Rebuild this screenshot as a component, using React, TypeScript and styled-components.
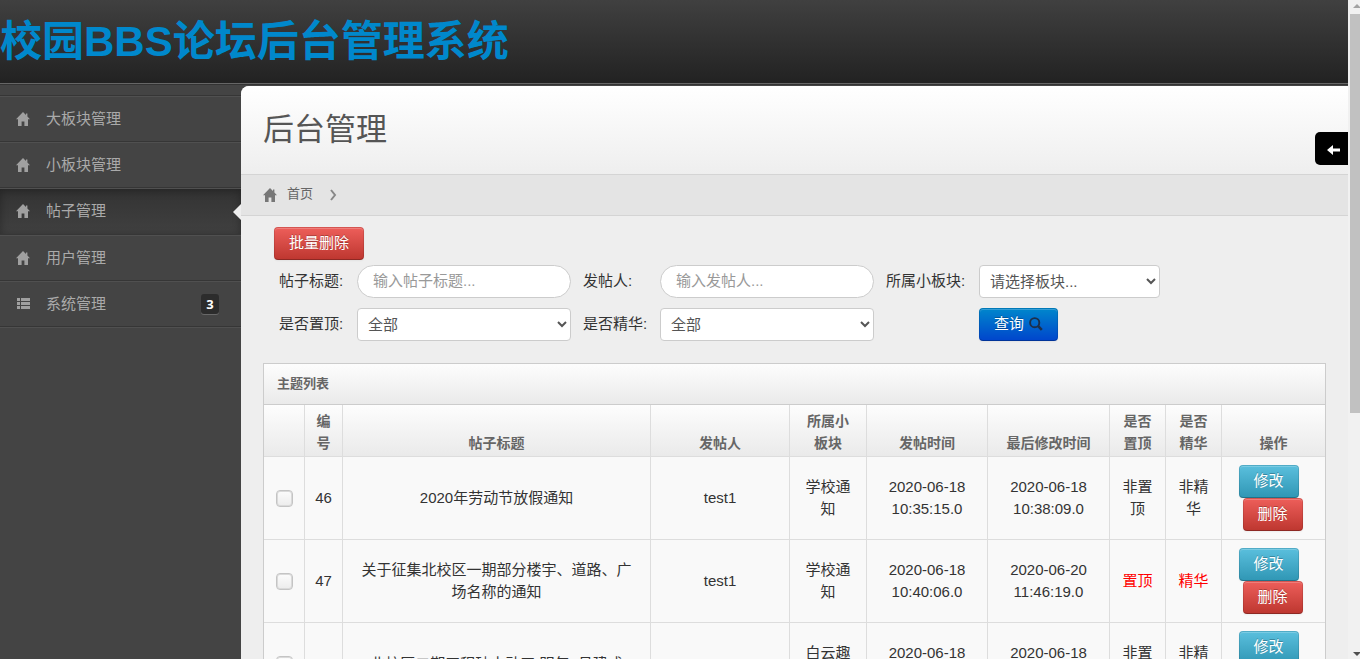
import React from "react";
import styled, { createGlobalStyle, css } from "styled-components";

const GlobalStyle = createGlobalStyle`
  *, *::before, *::after { box-sizing: border-box; }
  body {
    margin: 0;
    background: #444;
    color: #333;
    font-family: "Liberation Sans", "Noto Sans CJK SC", sans-serif;
    font-size: 15px;
    line-height: 22px;
  }
  button, input, select { font: inherit; margin: 0; }
`;

const Shell = styled.div`
  display: grid;
  grid-template-columns: minmax(0, 1fr) 12px;
  height: 100vh;
  overflow: hidden;
`;

const Page = styled.div`
  position: relative;
  display: flex;
  flex-direction: column;
  min-height: 0;
  overflow: hidden;
`;

const Header = styled.header`
  flex: none;
  height: 84px;
  background: linear-gradient(#404040, #222);
  border-bottom: 1px solid #666;
`;

const Brand = styled.h1`
  margin: 0;
  padding-top: 20px;
  font-size: 42px;
  line-height: 44px;
  white-space: nowrap;
`;

const BrandLink = styled.a`
  color: #08c;
  text-decoration: none;
`;

const Body = styled.div`
  display: flex;
  flex: 1;
  min-height: 0;
  padding-top: 1px;
  border-top: 1px solid #333;
`;

const Sidebar = styled.nav`
  flex: none;
  width: 241px;
`;

const Menu = styled.ul`
  list-style: none;
  margin: 9px 0 0;
  padding: 0;
  border-top: 1px solid #363636;
  border-bottom: 1px solid #505050;
`;

const MenuItem = styled.li<{ $active?: boolean }>`
  position: relative;
  border-top: 1px solid #505050;
  border-bottom: 1px solid #363636;
  ${(p) =>
    p.$active &&
    css`
      padding-bottom: 1px;
      background: linear-gradient(#333, #404040);
      box-shadow: inset 0 2px 8px rgba(0, 0, 0, 0.3);
      &::after {
        content: "";
        position: absolute;
        right: 0;
        top: 15px;
        border: 8px solid transparent;
        border-left: 0;
        border-right-color: #eee;
      }
    `}
`;

const MenuLink = styled.a`
  display: flex;
  align-items: center;
  height: 44px;
  padding: 0 22px 0 16px;
  color: #aaa;
  text-decoration: none;
  svg { margin-right: 16px; }
`;

const Badge = styled.span`
  margin-left: auto;
  width: 18px;
  height: 20px;
  border-radius: 3px;
  background: #2c2c2c;
  box-shadow: 0 1px 0 #686868;
  color: #fff;
  font-family: "Noto Sans", sans-serif;
  font-size: 13px;
  font-weight: 700;
  line-height: 20px;
  text-align: center;
`;

const Main = styled.main`
  flex: 1;
  min-width: 0;
  overflow: hidden;
  background: #eee;
  border-top-left-radius: 8px;
`;

const TitleBar = styled.div`
  height: 89px;
  padding: 22px;
  background: linear-gradient(#fff, #eee);
  border-bottom: 1px solid #d4d4d4;
`;

const Title = styled.h2`
  margin: 0;
  color: #555;
  font-size: 31px;
  font-weight: 400;
  line-height: 44px;
`;

const Crumbs = styled.nav`
  display: flex;
  align-items: center;
  height: 41px;
  padding: 0 22px;
  background: #e4e4e4;
  border-bottom: 1px solid #d4d4d4;
`;

const CrumbLink = styled.a`
  display: flex;
  align-items: center;
  gap: 10px;
  margin-right: 17px;
  color: #666;
  font-size: 13px;
  text-decoration: none;
  span { padding-bottom: 2px; }
`;

const tones = {
  danger: ["#ee5f5b", "#bd362f"],
  info: ["#5bc0de", "#2f96b4"],
  primary: ["#0088cc", "#0044cc"],
};

const Button = styled.button<{ $tone: keyof typeof tones }>`
  display: inline-flex;
  align-items: center;
  justify-content: center;
  gap: 5px;
  height: 33px;
  padding: 0 12px 1px;
  min-width: 60px;
  border: 1px solid;
  border-color: rgba(0, 0, 0, 0.1) rgba(0, 0, 0, 0.1) rgba(0, 0, 0, 0.25);
  border-radius: 4px;
  background: linear-gradient(${(p) => tones[p.$tone][0]}, ${(p) => tones[p.$tone][1]}) border-box;
  box-shadow: inset 0 1px 0 rgba(255, 255, 255, 0.2), 0 1px 2px rgba(0, 0, 0, 0.05);
  color: #fff;
  text-shadow: 0 -1px 0 rgba(0, 0, 0, 0.25);
  white-space: nowrap;
  cursor: pointer;
`;

const Toolbar = styled.div`
  padding: 11px 33px 5px;
  button { min-width: 90px; }
`;

const Filters = styled.form`
  display: grid;
  grid-template-columns: 66px 214px 65px 214px 81px 181px;
  gap: 10px 12px;
  padding: 0 38px;
  color: #333;
`;

const Label = styled.label`
  padding-top: 5px;
  white-space: nowrap;
`;

const TextInput = styled.input`
  width: 100%;
  height: 33px;
  padding: 0 15px 2px;
  border: 1px solid #ccc;
  border-radius: 17px;
  background: #fff;
  color: #555;
  outline: none;
  &::placeholder { color: #999; }
`;

const Select = styled.select`
  width: 100%;
  height: 33px;
  padding: 0 6px;
  border: 1px solid #ccc;
  border-radius: 4px;
  background: #fff;
  color: #555;
`;

const SubmitCell = styled.div`
  grid-column: 6;
  button { min-width: 79px; }
`;

const Panel = styled.section`
  margin: 22px 22px 0;
  border: 1px solid #ccc;
  background: #f9f9f9;
`;

const PanelTitle = styled.h3`
  margin: 0;
  height: 41px;
  padding: 0 13px;
  background: linear-gradient(#fdfdfd, #eaeaea);
  border-bottom: 1px solid #ccc;
  color: #666;
  font-size: 13px;
  line-height: 40px;
`;

const Table = styled.table`
  width: 100%;
  table-layout: fixed;
  border-collapse: separate;
  border-spacing: 0;
  text-align: center;
`;

const Col = styled.col<{ $w?: number }>`
  width: ${(p) => (p.$w ? `${p.$w}px` : "auto")};
`;

const cell = css`
  border-bottom: 1px solid #ddd;
  &:not(:first-child) { border-left: 1px solid #ddd; }
`;

const Th = styled.th<{ $tight?: boolean }>`
  ${cell}
  padding: 5px ${(p) => (p.$tight ? 8 : 12)}px 2px;
  background: linear-gradient(#fdfdfd, #eaeaea);
  color: #666;
  font-size: 14px;
  vertical-align: bottom;
`;

const Td = styled.td<{ $tight?: boolean; $hot?: boolean }>`
  ${cell}
  padding: 8px ${(p) => (p.$tight ? 8 : 12)}px;
  color: ${(p) => (p.$hot ? "#f00" : "#333")};
  vertical-align: middle;
`;

const Check = styled.input`
  appearance: none;
  display: block;
  width: 17px;
  height: 17px;
  margin: 0 auto;
  border: 1px solid #c4c4c4;
  border-radius: 4px;
  background: linear-gradient(#fcfcfc, #ececec);
  box-shadow: inset 0 0 0 1px #dadada;
`;

const Actions = styled.div`
  display: flex;
  flex-direction: column;
  align-items: center;
  padding-right: 2px;
  button:first-child { margin-right: 8px; }
`;

const Toggle = styled.button`
  position: absolute;
  top: 132px;
  right: 0;
  display: flex;
  align-items: center;
  justify-content: center;
  width: 33px;
  height: 33px;
  padding: 2px 0 0 4px;
  border: 0;
  border-radius: 5px 0 0 5px;
  background: #000;
`;

const ScrollTrack = styled.div`
  display: flex;
  flex-direction: column;
  justify-content: space-between;
  padding: 4px 0 2px 2px;
  background: #f1f1f1;
`;

const ScrollThumb = styled.div`
  width: 10px;
  height: 399px;
  margin: 5px 0 auto;
  background: #c1c1c1;
`;

const HomeIcon = ({ color = "#a0a0a0" }: { color?: string }) => (
  <svg width="14" height="14" viewBox="0 0 14 14" fill={color} aria-hidden="true">
    <path d="M7 0 0 7.2h2V14h3.6V9.6h2.8V14H12V7.2h2L11.4 4.5V1.6H10v1.5z" />
  </svg>
);

const ListIcon = () => (
  <svg width="14" height="14" viewBox="0 0 14 14" fill="#a0a0a0" aria-hidden="true">
    <path d="M1 1h3v3H1zM5 1h9v3H5zM1 5h3v3H1zM5 5h9v3H5zM1 9h3v3H1zM5 9h9v3H5z" />
  </svg>
);

const SearchIcon = () => (
  <svg width="14" height="14" viewBox="0 0 14 14" fill="none" stroke="#1c2f4a" aria-hidden="true">
    <circle cx="5.7" cy="5.7" r="4.6" strokeWidth="1.9" />
    <path d="m9.2 9.2 3.6 3.6" strokeWidth="2.6" />
  </svg>
);

const ArrowLeft = () => (
  <svg width="13" height="10" viewBox="0 0 13 10" fill="#fff" aria-hidden="true">
    <path d="M0 5 6 0v3.4h7v3.2H6V10z" />
  </svg>
);

const menu = [
  { label: "大板块管理" },
  { label: "小板块管理" },
  { label: "帖子管理", active: true },
  { label: "用户管理" },
  { label: "系统管理", count: 3 },
];

const columns: { label: string; width?: number; tight?: boolean }[] = [
  { label: "", width: 40, tight: true },
  { label: "编号", width: 38, tight: true },
  { label: "帖子标题" },
  { label: "发帖人", width: 139 },
  { label: "所属小板块", width: 77 },
  { label: "发帖时间", width: 121 },
  { label: "最后修改时间", width: 122 },
  { label: "是否置顶", width: 56 },
  { label: "是否精华", width: 56 },
  { label: "操作", width: 104 },
];

const posts = [
  { id: 46, title: "2020年劳动节放假通知", user: "test1", board: "学校通知", created: "2020-06-18 10:35:15.0", updated: "2020-06-18 10:38:09.0", top: false, best: false },
  { id: 47, title: "关于征集北校区一期部分楼宇、道路、广场名称的通知", user: "test1", board: "学校通知", created: "2020-06-18 10:40:06.0", updated: "2020-06-20 11:46:19.0", top: true, best: true },
  { id: 48, title: "北校区二期工程破土动工,明年9月建成", user: "test2", board: "白云趣事", created: "2020-06-18 10:42:31.0", updated: "2020-06-18 10:42:31.0", top: false, best: false },
];

export default function App() {
  return (
    <>
      <GlobalStyle />
      <Shell>
        <Page>
          <Header>
            <Brand>
              <BrandLink href="#">校园BBS论坛后台管理系统</BrandLink>
            </Brand>
          </Header>
          <Body>
            <Sidebar>
              <Menu>
                {menu.map((m) => (
                  <MenuItem key={m.label} $active={m.active}>
                    <MenuLink href="#">
                      {m.count ? <ListIcon /> : <HomeIcon />}
                      {m.label}
                      {m.count && <Badge>{m.count}</Badge>}
                    </MenuLink>
                  </MenuItem>
                ))}
              </Menu>
            </Sidebar>
            <Main>
              <TitleBar>
                <Title>后台管理</Title>
              </TitleBar>
              <Crumbs>
                <CrumbLink href="#">
                  <HomeIcon color="#777" />
                  <span>首页</span>
                </CrumbLink>
                <svg width="7" height="12" viewBox="0 0 7 12" fill="none" stroke="#888" strokeWidth="2" aria-hidden="true">
                  <path d="m1 1 4 5-4 5" />
                </svg>
              </Crumbs>
              <Toolbar>
                <Button type="button" $tone="danger">批量删除</Button>
              </Toolbar>
              <Filters>
                <Label htmlFor="title">帖子标题:</Label>
                <TextInput id="title" placeholder="输入帖子标题..." />
                <Label htmlFor="user">发帖人:</Label>
                <TextInput id="user" placeholder="输入发帖人..." />
                <Label htmlFor="board">所属小板块:</Label>
                <Select id="board">
                  <option>请选择板块...</option>
                </Select>
                <Label htmlFor="top">是否置顶:</Label>
                <Select id="top">
                  <option>全部</option>
                </Select>
                <Label htmlFor="best">是否精华:</Label>
                <Select id="best">
                  <option>全部</option>
                </Select>
                <SubmitCell>
                  <Button type="button" $tone="primary">
                    查询 <SearchIcon />
                  </Button>
                </SubmitCell>
              </Filters>
              <Panel>
                <PanelTitle>主题列表</PanelTitle>
                <Table>
                  <colgroup>
                    {columns.map((c, i) => (
                      <Col key={i} $w={c.width} />
                    ))}
                  </colgroup>
                  <thead>
                    <tr>
                      {columns.map((c, i) => (
                        <Th key={i} $tight={c.tight}>{c.label}</Th>
                      ))}
                    </tr>
                  </thead>
                  <tbody>
                    {posts.map((p) => (
                      <tr key={p.id}>
                        <Td $tight>
                          <Check type="checkbox" aria-label={`选择 ${p.id}`} />
                        </Td>
                        <Td $tight>{p.id}</Td>
                        <Td>{p.title}</Td>
                        <Td>{p.user}</Td>
                        <Td>{p.board}</Td>
                        <Td>{p.created}</Td>
                        <Td>{p.updated}</Td>
                        <Td $hot={p.top}>{p.top ? "置顶" : "非置顶"}</Td>
                        <Td $hot={p.best}>{p.best ? "精华" : "非精华"}</Td>
                        <Td>
                          <Actions>
                            <Button type="button" $tone="info">修改</Button>
                            <Button type="button" $tone="danger">删除</Button>
                          </Actions>
                        </Td>
                      </tr>
                    ))}
                  </tbody>
                </Table>
              </Panel>
            </Main>
          </Body>
          <Toggle type="button" aria-label="展开">
            <ArrowLeft />
          </Toggle>
        </Page>
        <ScrollTrack aria-hidden="true">
          <svg width="10" height="5" viewBox="0 0 10 5" fill="#a3a3a3"><path d="m3 4 4-4 4 4z" /></svg>
          <ScrollThumb />
          <svg width="10" height="5" viewBox="0 0 10 5" fill="#505050"><path d="m3 0 4 4 4-4z" /></svg>
        </ScrollTrack>
      </Shell>
    </>
  );
}
